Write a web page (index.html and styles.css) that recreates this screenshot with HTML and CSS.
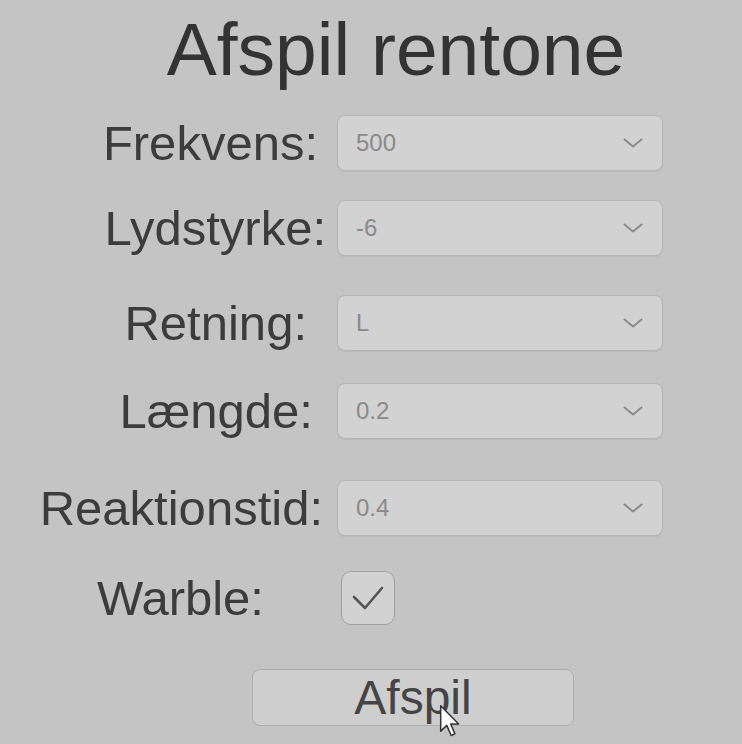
FILE: index.html
```html
<!DOCTYPE html>
<html lang="da">
<head>
<meta charset="utf-8">
<title>Afspil rentone</title>
<link rel="stylesheet" href="styles.css">
</head>
<body>
<main class="panel">
  <h1 class="title">Afspil rentone</h1>
  <div class="form">
    <div class="row r1">
      <label class="label">Frekvens:</label>
      <div class="select"><span class="value">500</span>
        <svg class="chev" width="20" height="10" viewBox="0 0 20 10"><path d="M1.5 1.5 L10 8.5 L18.5 1.5" fill="none" stroke="#8a8a8a" stroke-width="2" stroke-linecap="round" stroke-linejoin="round"/></svg>
      </div>
    </div>
    <div class="row r2">
      <label class="label">Lydstyrke:</label>
      <div class="select"><span class="value">-6</span>
        <svg class="chev" width="20" height="10" viewBox="0 0 20 10"><path d="M1.5 1.5 L10 8.5 L18.5 1.5" fill="none" stroke="#8a8a8a" stroke-width="2" stroke-linecap="round" stroke-linejoin="round"/></svg>
      </div>
    </div>
    <div class="row r3">
      <label class="label">Retning:</label>
      <div class="select"><span class="value">L</span>
        <svg class="chev" width="20" height="10" viewBox="0 0 20 10"><path d="M1.5 1.5 L10 8.5 L18.5 1.5" fill="none" stroke="#8a8a8a" stroke-width="2" stroke-linecap="round" stroke-linejoin="round"/></svg>
      </div>
    </div>
    <div class="row r4">
      <label class="label">Længde:</label>
      <div class="select"><span class="value">0.2</span>
        <svg class="chev" width="20" height="10" viewBox="0 0 20 10"><path d="M1.5 1.5 L10 8.5 L18.5 1.5" fill="none" stroke="#8a8a8a" stroke-width="2" stroke-linecap="round" stroke-linejoin="round"/></svg>
      </div>
    </div>
    <div class="row r5">
      <label class="label">Reaktionstid:</label>
      <div class="select"><span class="value">0.4</span>
        <svg class="chev" width="20" height="10" viewBox="0 0 20 10"><path d="M1.5 1.5 L10 8.5 L18.5 1.5" fill="none" stroke="#8a8a8a" stroke-width="2" stroke-linecap="round" stroke-linejoin="round"/></svg>
      </div>
    </div>
    <div class="row r6">
      <label class="label">Warble:</label>
      <div class="checkbox">
        <svg width="34" height="28" viewBox="0 0 34 28"><path d="M3 12 L14 23 L31 3" fill="none" stroke="#555" stroke-width="2.6" stroke-linecap="round" stroke-linejoin="round"/></svg>
      </div>
    </div>
  </div>
  <div class="actions">
    <button class="btn" type="button">Afspil</button>
  </div>
  <svg class="cursor" width="22" height="34" viewBox="0 0 13 20"><path d="M1 1 L1 16 L4.6 12.6 L7.2 18.6 L9.4 17.6 L6.9 11.8 L11.6 11.8 Z" fill="#fff" stroke="#333" stroke-width="0.9" stroke-linejoin="round"/></svg>
</main>
</body>
</html>
```

FILE: styles.css
```css
html, body {
  margin: 0;
  padding: 0;
  background: #c4c4c4;
}
body {
  width: 742px;
  height: 744px;
  overflow: hidden;
  font-family: "Liberation Sans", Arial, sans-serif;
}
.panel {
  position: relative;
  height: 744px;
}
.title {
  margin: 0;
  padding: 12px 0 0 50px;
  font-size: 75px;
  line-height: 75px;
  font-weight: normal;
  color: #333;
  text-align: center;
}
.form {
  display: flex;
  flex-direction: column;
}
.row {
  display: flex;
  align-items: center;
}
.label {
  width: 337px;
  box-sizing: border-box;
  text-align: right;
  font-size: 49px;
  line-height: 49px;
  color: #3c3c3c;
  white-space: nowrap;
}
.select {
  width: 326px;
  height: 56px;
  box-sizing: border-box;
  background: #d2d2d2;
  border: 1px solid #b5b5b5;
  border-radius: 8px;
  box-shadow: 0 1px 1px rgba(0,0,0,0.06);
  display: flex;
  align-items: center;
  justify-content: space-between;
  padding: 0 19px 0 18px;
}
.value {
  font-size: 24px;
  color: #8a8a8a;
}
.chev {
  display: block;
}
.r1 { margin-top: 28px; }
.r2 { margin-top: 29px; }
.r3 { margin-top: 39px; }
.r4 { margin-top: 32px; }
.r5 { margin-top: 41px; }
.r6 { margin-top: 35px; }
.r1 .label { padding-right: 19px; }
.r2 .label { padding-right: 11px; }
.r3 .label { padding-right: 30px; }
.r4 .label { padding-right: 24px; }
.r5 .label { padding-right: 14px; }
.r6 .label { padding-right: 73px; }
.checkbox {
  width: 54px;
  height: 54px;
  margin-left: 4px;
  box-sizing: border-box;
  background: #d2d2d2;
  border: 1.5px solid #a0a0a0;
  border-radius: 10px;
  display: flex;
  align-items: center;
  justify-content: center;
}
.checkbox svg {
  display: block;
  margin-top: 2px;
}
.actions {
  margin-top: 44px;
  padding-left: 252px;
}
.btn {
  display: block;
  width: 322px;
  height: 57px;
  box-sizing: border-box;
  margin: 0;
  padding: 0;
  background: #cecece;
  border: 1px solid #adadad;
  border-radius: 8px;
  font-family: "Liberation Sans", Arial, sans-serif;
  font-size: 48px;
  line-height: 48px;
  color: #444;
}
.cursor {
  position: absolute;
  left: 439px;
  top: 704px;
}
```
